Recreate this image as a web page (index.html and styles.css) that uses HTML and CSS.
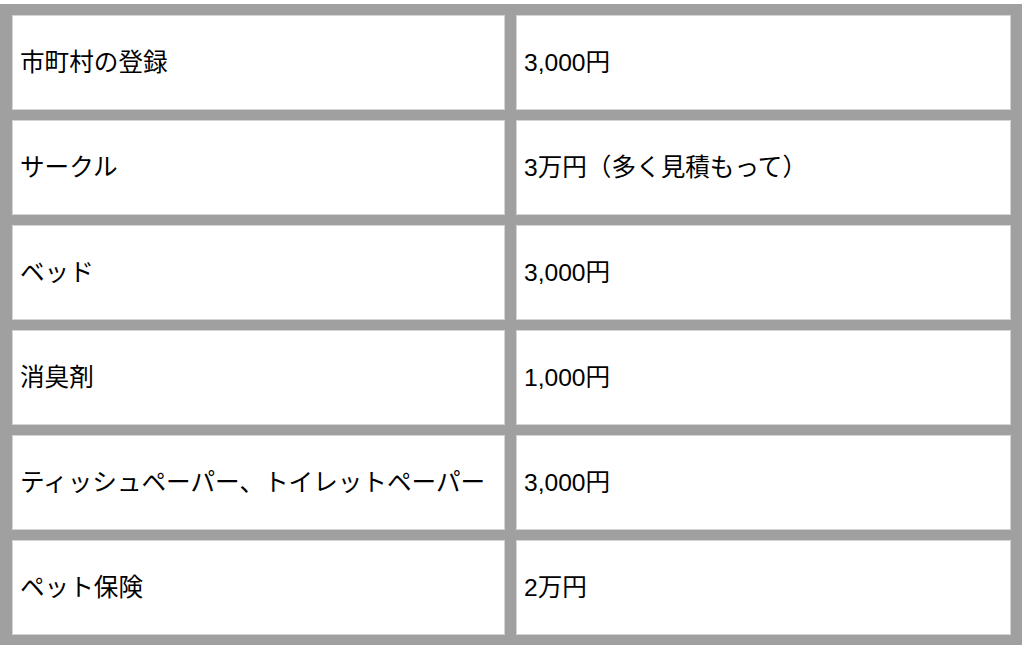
FILE: index.html
```html
<!DOCTYPE html>
<html lang="ja">
<head>
<meta charset="utf-8">
<title>費用</title>
<link rel="stylesheet" href="styles.css">
</head>
<body>
<div class="cost-table">
  <div class="cell">市町村の登録</div>
  <div class="cell">3,000円</div>
  <div class="cell">サークル</div>
  <div class="cell">3万円（多く見積もって）</div>
  <div class="cell">ベッド</div>
  <div class="cell">3,000円</div>
  <div class="cell">消臭剤</div>
  <div class="cell">1,000円</div>
  <div class="cell">ティッシュペーパー、トイレットペーパー</div>
  <div class="cell">3,000円</div>
  <div class="cell">ペット保険</div>
  <div class="cell">2万円</div>
</div>
</body>
</html>
```
FILE: styles.css
```css
html, body {
  margin: 0;
  padding: 0;
  background: #ffffff;
}

body {
  font-family: "Liberation Sans", "Noto Sans CJK JP", sans-serif;
  font-size: 24.6px;
  color: #000000;
}

.cost-table {
  box-sizing: border-box;
  width: 1022px;
  margin-top: 4px;
  padding: 11px 11px 10px 12px;
  background: #a0a0a0;
  display: grid;
  grid-template-columns: 493px 495px;
  grid-auto-rows: 95px;
  column-gap: 11px;
  row-gap: 10px;
}

.cell {
  box-sizing: border-box;
  background: #ffffff;
  border: 1px solid #d4d4d4;
  display: flex;
  align-items: center;
  padding: 1px 0 0 7px;
  line-height: 1;
  white-space: nowrap;
}
```
